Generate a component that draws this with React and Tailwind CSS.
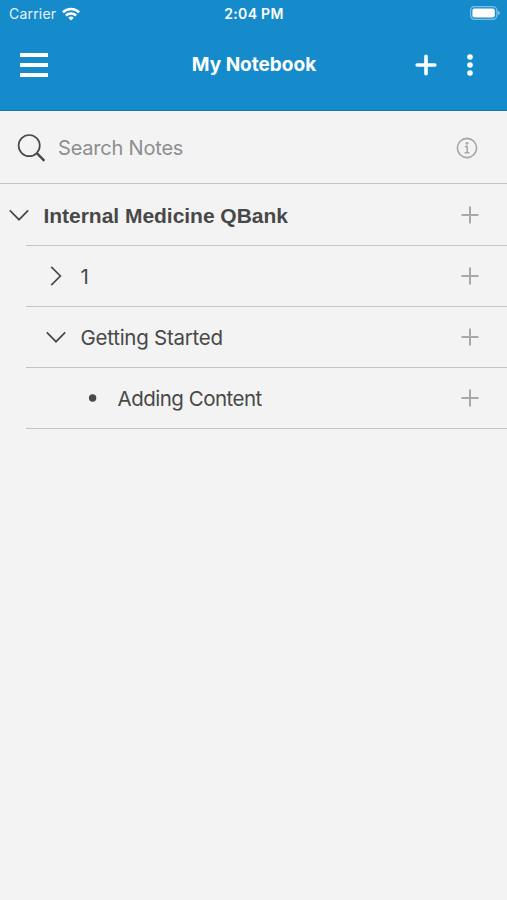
const WifiIcon = () => (
  <svg width="18" height="14" viewBox="0 0 18 14" fill="none" stroke="white" strokeWidth="2.5">
    <path d="M0.9 5.3a11.6 11.6 0 0 1 16.2 0" />
    <path d="M3.9 8.5a7.3 7.3 0 0 1 10.2 0" />
    <path d="M9 13.6l-2.7-2.8a3.9 3.9 0 0 1 5.4 0z" fill="white" stroke="none" />
  </svg>
)

const BatteryIcon = () => (
  <svg width="30" height="14" viewBox="0 0 30 14">
    <rect x="0.6" y="0.6" width="26.2" height="12.8" rx="3.8" fill="none" stroke="white" strokeOpacity="0.45" strokeWidth="1.2" />
    <rect x="2.4" y="2.4" width="22.4" height="9.2" rx="2" fill="white" />
    <path d="M27.8 4.8c1.2.4 1.9 1.2 1.9 2.2s-.7 1.8-1.9 2.2z" fill="white" fillOpacity="0.5" />
  </svg>
)

const PlusIcon = () => (
  <svg width="18" height="18" viewBox="0 0 18 18" stroke="#a9a9a9" strokeWidth="2">
    <path d="M9 0.5v17M0.5 9h17" />
  </svg>
)

const ChevronDown = () => (
  <svg width="22" height="12" viewBox="0 0 22 12" fill="none" stroke="#484848" strokeWidth="1.7">
    <path d="M1.8 1.4l9.2 9.3 9.2-9.3" />
  </svg>
)

const ChevronRight = () => (
  <svg width="22" height="20" viewBox="0 0 22 20" fill="none" stroke="#484848" strokeWidth="1.7">
    <path d="M6.2 0.8l9.2 9.2-9.2 9.2" />
  </svg>
)

const Bullet = () => (
  <svg width="22" height="8" viewBox="0 0 22 8">
    <circle cx="10.6" cy="4" r="3.7" fill="#484848" />
  </svg>
)

const notes = [
  { label: 'Internal Medicine QBank', icon: ChevronDown, indent: 'pl-2', text: "font-['Liberation_Sans',sans-serif] font-bold text-[21px] tracking-[-0.03px]" },
  { label: '1', icon: ChevronRight, indent: 'pl-[45px]', text: 'text-[20.5px]' },
  { label: 'Getting Started', icon: ChevronDown, indent: 'pl-[45px]', text: 'text-[20.5px] tracking-[-0.25px]' },
  { label: 'Adding Content', icon: Bullet, indent: 'pl-[82px]', text: 'text-[20.5px] tracking-[-0.5px]' },
]

const NoteRow = ({ label, icon: Icon, indent, text }) => (
  <li>
    <div className={`flex h-[60px] items-center pr-7 ${indent}`}>
      <Icon />
      <span className={`ml-[13.5px] flex-1 whitespace-nowrap pt-0.5 leading-6 text-[#484848] ${text}`}>{label}</span>
      <button>
        <PlusIcon />
      </button>
    </div>
    <div className="ml-[26px] h-px bg-[#c4c4c4]" />
  </li>
)

const Header = () => (
  <header className="h-[111px] border-b border-[#1079b4] bg-[#168bcc] text-white">
    <div className="grid h-[26px] grid-cols-3 items-center pl-[9px] pr-[7px]">
      <div className="flex items-center gap-1.5 pt-px">
        <span className="text-[14px] tracking-[0.2px] text-white/90">Carrier</span>
        <WifiIcon />
      </div>
      <span className="pr-px text-center text-[14px] font-semibold tracking-[0.3px]">2:04 PM</span>
      <div className="flex justify-end">
        <BatteryIcon />
      </div>
    </div>
    <div className="mt-px grid h-[75px] grid-cols-3 items-center px-5">
      <button className="flex w-7 flex-col gap-1.5">
        <span className="h-1 w-7 bg-white" />
        <span className="h-1 w-7 bg-white" />
        <span className="h-1 w-7 bg-white" />
      </button>
      <h1 className="whitespace-nowrap pl-px pt-0.5 text-center text-[19px] font-bold">My Notebook</h1>
      <div className="flex items-center justify-end gap-[29px] pr-[13px]">
        <svg width="22" height="22" viewBox="0 0 22 22" stroke="white" strokeWidth="3.6" strokeLinecap="round">
          <path d="M11 2.2v17.6M2.2 11h17.6" />
        </svg>
        <svg width="8" height="22" viewBox="0 0 8 22" fill="white">
          <circle cx="4" cy="3" r="2.8" />
          <circle cx="4" cy="11" r="2.8" />
          <circle cx="4" cy="19" r="2.8" />
        </svg>
      </div>
    </div>
  </header>
)

const SearchBar = () => (
  <div className="flex h-[73px] items-center border-b border-[#c4c4c4] pl-[17px] pr-[29px] pt-0.5">
    <svg width="29" height="29" viewBox="0 0 29 29" fill="none" stroke="#484848">
      <circle cx="12.2" cy="11.6" r="10.6" strokeWidth="1.7" />
      <path d="M19.8 19.2l7.6 7.6" strokeWidth="2.4" />
    </svg>
    <span className="ml-3 flex-1 text-[20px] tracking-[-0.2px] text-[#8e8e8e]">Search Notes</span>
    <svg width="22" height="22" viewBox="0 0 22 22" fill="none" stroke="#a5a5a5">
      <circle cx="11" cy="11" r="9.6" strokeWidth="1.6" />
      <circle cx="11" cy="6.3" r="1.4" fill="#a5a5a5" stroke="none" />
      <path d="M8.8 9.4h2.4v6.2M8.6 15.8h4.8" strokeWidth="1.5" />
    </svg>
  </div>
)

export default function App() {
  return (
    <div className="min-h-screen bg-[#f3f3f3] font-['Inter',sans-serif]">
      <Header />
      <SearchBar />
      <ul className="pt-px">
        {notes.map((note) => (
          <NoteRow key={note.label} {...note} />
        ))}
      </ul>
    </div>
  )
}
